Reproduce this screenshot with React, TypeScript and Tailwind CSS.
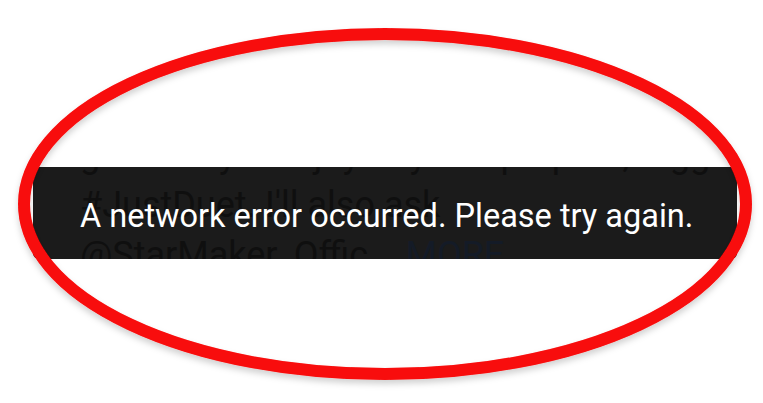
export default function App() {
  return (
    <div className="relative h-[403px] w-[763px] overflow-hidden bg-white pt-[167px] pl-[33px] font-['Roboto',sans-serif]">
      {/* snackbar over the feed text */}
      <div className="relative h-[92px] w-[704px] overflow-hidden rounded-[6px] bg-[#1b1b1b]">
        <div className="-mt-[37px] pl-[47px] text-[36px] leading-[50px] text-[#0f0f0f]">
          <div className="whitespace-nowrap">gracefully and joyfully as i prepare, tagging</div>
          <div className="whitespace-nowrap">#JustDuet. I'll also ask</div>
          <div className="whitespace-nowrap">
            @StarMaker_Offic... <span className="text-[#141b27]">MORE</span>
          </div>
        </div>
        <div className="absolute left-[47px] top-[30px] whitespace-nowrap text-[32.5px] leading-[38px] text-white">
          A network error occurred. Please try again.
        </div>
      </div>

      {/* red annotation ring */}
      <svg
        className="pointer-events-none absolute left-0 top-0"
        width="763"
        height="403"
        viewBox="0 0 763 403"
      >
        <defs>
          <filter id="ring-shadow" x="-10%" y="-10%" width="120%" height="130%">
            <feDropShadow dx="0" dy="4" stdDeviation="3" floodColor="#000" floodOpacity="0.18" />
          </filter>
        </defs>
        <ellipse
          cx="385"
          cy="204"
          rx="361"
          ry="170"
          fill="none"
          stroke="#f80808"
          strokeWidth="12"
          filter="url(#ring-shadow)"
        />
      </svg>
    </div>
  );
}
